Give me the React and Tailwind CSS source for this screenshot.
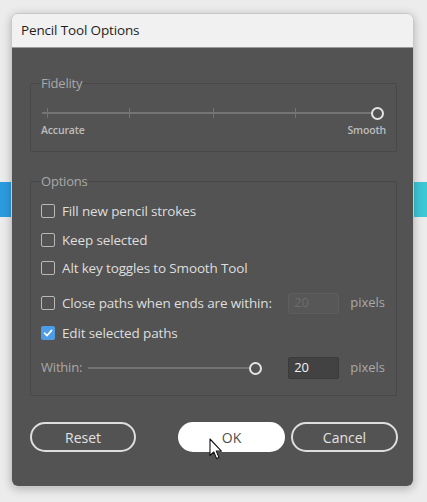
import React from 'react';

const font = { fontFamily: '"Open Sans", "Noto Sans", sans-serif' };

const Checkbox = ({ checked }) => (
  <div
    className={`w-[14px] h-[14px] rounded-[2px] flex items-center justify-center shrink-0 ${
      checked ? 'bg-[#4d9de6]' : 'border-[1.5px] border-[#b8b8b8]'
    }`}
  >
    {checked && (
      <svg width="10" height="10" viewBox="0 0 10 10" fill="none">
        <path d="M1.5 5.2L4 7.6L8.6 2.4" stroke="#fff" strokeWidth="1.6" strokeLinecap="round" strokeLinejoin="round" />
      </svg>
    )}
  </div>
);

const Row = ({ checked, label, className = '', children }) => (
  <div className={`flex items-center h-[22px] ${className}`}>
    <Checkbox checked={checked} />
    <span className="ml-[7px] text-[13.5px] text-[#dedede] tracking-[-0.15px]">{label}</span>
    {children}
  </div>
);

const Thumb = () => (
  <div className="w-[13px] h-[13px] rounded-full border-2 border-[#e4e4e4] bg-[#535353] shrink-0" />
);

const App = () => {
  return (
    <div className="relative w-[427px] h-[502px] bg-[#ececec] overflow-hidden" style={font}>
      {/* background content behind dialog */}
      <div className="h-[182px]" />
      <div className="h-[35px] w-full bg-gradient-to-r from-[#2c9ce0] to-[#3fc7d6]" />

      {/* dialog */}
      <div className="absolute left-[11px] top-[13px] w-[403px] h-[474px] rounded-[7px] overflow-hidden flex flex-col shadow-[0_2px_10px_rgba(0,0,0,0.25)] border border-[#c8c8c8]">
        <div className="h-[34px] bg-[#f1f1f1] border-b border-[#9a9a9a] flex items-center pl-[9px] shrink-0">
          <span className="text-[13.5px] text-[#1e1e1e] tracking-[-0.15px]">Pencil Tool Options</span>
        </div>

        <div className="flex-1 bg-[#535353] pt-[26px] pl-[18px]">
          {/* Fidelity */}
          <fieldset className="w-[367px] border border-[#484848] rounded-[2px] px-[10px] pb-[15px]">
            <legend className="text-[13px] text-[#a9a9a9] leading-[18px] px-0 tracking-[-0.2px]">Fidelity</legend>
            <div className="relative h-[14px] mt-[14px] flex items-center">
              <div className="absolute left-[1px] right-[7px] top-1/2 h-[2px] -translate-y-1/2 bg-[#747474]" />
              <div className="absolute left-[6px] top-[2px] w-[1px] h-[10px] bg-[#747474]" />
              <div className="absolute left-[88px] top-[2px] w-[1px] h-[10px] bg-[#747474]" />
              <div className="absolute left-[172px] top-[2px] w-[1px] h-[10px] bg-[#747474]" />
              <div className="absolute left-[254px] top-[2px] w-[1px] h-[10px] bg-[#747474]" />
              <div className="ml-auto mr-[2px] relative">
                <Thumb />
              </div>
            </div>
            <div className="mt-[4px] flex justify-between text-[10.5px] font-semibold text-[#bdbdbd] leading-[12px] tracking-[-0.15px]">
              <span>Accurate</span>
              <span>Smooth</span>
            </div>
          </fieldset>

          {/* Options */}
          <fieldset className="w-[367px] mt-[20px] border border-[#484848] rounded-[2px] px-[10px] pb-[16px]">
            <legend className="text-[13px] text-[#a9a9a9] leading-[18px] px-0 tracking-[-0.2px]">Options</legend>
            <Row label="Fill new pencil strokes" className="mt-[10px]" />
            <Row label="Keep selected" className="mt-[7px]" />
            <Row label="Alt key toggles to Smooth Tool" className="mt-[6px]" />
            <Row label="Close paths when ends are within:" className="mt-[13px]">
              <div className="ml-auto w-[51px] h-[21px] bg-[#575757] border border-[#5d5d5d] rounded-[2px] flex items-center pl-[5px] text-[13px] text-[#6c6c6c]">
                20
              </div>
              <span className="ml-[11px] mr-[1px] text-[13px] text-[#a9a9a9]">pixels</span>
            </Row>
            <Row checked label="Edit selected paths" className="mt-[8px]" />
            <div className="flex items-center h-[22px] mt-[13px]">
              <span className="text-[13px] text-[#a9a9a9] tracking-[-0.2px]">Within:</span>
              <div className="flex-1 flex items-center ml-[6px]">
                <div className="flex-1 h-[2px] bg-[#747474]" />
                <Thumb />
              </div>
              <div className="ml-[26px] w-[51px] h-[22px] bg-[#424242] border border-[#3b3b3b] rounded-[2px] flex items-center pl-[5px] text-[13px] text-[#f2f2f2]">
                20
              </div>
              <span className="ml-[11px] mr-[1px] text-[13px] text-[#a9a9a9]">pixels</span>
            </div>
          </fieldset>

          {/* Buttons */}
          <div className="w-[368px] mt-[26px] flex items-center">
            <button className="w-[106px] h-[30px] rounded-full border-2 border-[#dedede] text-[14px] text-[#e2e2e2]">
              Reset
            </button>
            <button className="ml-auto w-[107px] h-[30px] rounded-full bg-white text-[14px] text-[#505050]">
              OK
            </button>
            <button className="ml-[6px] w-[107px] h-[30px] rounded-full border-2 border-[#dedede] text-[14px] text-[#e2e2e2]">
              Cancel
            </button>
          </div>
        </div>
      </div>

      {/* mouse cursor */}
      <svg className="absolute left-[209px] top-[438px]" width="14" height="23" viewBox="0 0 14 23">
        <path d="M1 1 L1 17.5 L4.8 14 L7.6 20.6 L10 19.6 L7.3 13.1 L12.4 13.1 Z" fill="#fff" stroke="#111" strokeWidth="1.1" strokeLinejoin="round" />
      </svg>
    </div>
  );
};

export default App;
